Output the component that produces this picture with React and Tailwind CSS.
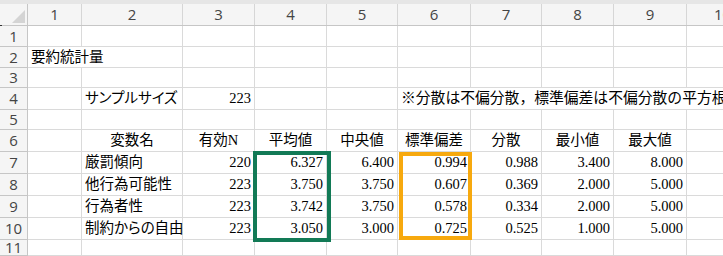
import React from 'react';

const colWidths = [54, 101, 72, 72, 71, 73, 71, 72, 73, 72];
const rowHeights = [21, 21, 20, 22, 20, 22, 22, 22, 22, 22, 16];

const vars = [
  ['厳罰傾向', '220', '6.327', '6.400', '0.994', '0.988', '3.400', '8.000'],
  ['他行為可能性', '223', '3.750', '3.750', '0.607', '0.369', '2.000', '5.000'],
  ['行為者性', '223', '3.742', '3.750', '0.578', '0.334', '2.000', '5.000'],
  ['制約からの自由', '223', '3.050', '3.000', '0.725', '0.525', '1.000', '5.000'],
];

const heads = ['変数名', '有効N', '平均値', '中央値', '標準偏差', '分散', '最小値', '最大値'];

// cells[row][col] = { text, align, noRight }
function cellFor(r, c) {
  if (r === 2 && c === 1) return { text: '要約統計量', align: 'left', noRight: true };
  if (r === 4) {
    if (c === 2) return { text: 'サンプルサイズ', align: 'left' };
    if (c === 3) return { text: '223', align: 'right' };
    if (c === 6) return { text: '※分散は不偏分散，標準偏差は不偏分散の平方根', align: 'left', noRight: true, note: true };
    if (c > 6) return { text: '', noRight: true };
  }
  if (r === 6 && c >= 2 && c <= 9) return { text: heads[c - 2], align: 'center' };
  if (r >= 7 && r <= 10 && c >= 2 && c <= 9) {
    const v = vars[r - 7][c - 2];
    return { text: v, align: c === 2 ? 'left' : 'right' };
  }
  return { text: '' };
}

function Cell({ w, h, r, c }) {
  const { text, align, noRight, note } = cellFor(r, c);
  const justify =
    align === 'right' ? 'justify-end pr-[3px]' : align === 'center' ? 'justify-center' : 'justify-start pl-[3px]';
  return (
    <div
      className={`shrink-0 flex items-center border-b border-[#dadada] ${noRight ? '' : 'border-r'} ${justify}`}
      style={{ width: w, height: h }}
    >
      {text && (
        <span
          className={`whitespace-nowrap relative z-10 text-black leading-none ${
            note ? 'text-[14.8px]' : "text-[14.5px] [font-feature-settings:'palt']"
          }`}
        >
          {text}
        </span>
      )}
    </div>
  );
}

export default function App() {
  return (
    <div className="relative w-[723px] h-[256px] overflow-hidden bg-white font-['Liberation_Serif','Noto_Sans_CJK_JP',serif]">
      {/* top band */}
      <div className="h-[4px] bg-[#e6e6e6]" />

      {/* column header */}
      <div className="flex h-[22px] bg-[#f5f5f5] border-b border-[#c6c6c6] font-['Open_Sans','Noto_Sans',sans-serif] text-[15px] text-[#444]">
        <div className="relative w-[28px] shrink-0 border-r border-[#c6c6c6]">
          <div className="absolute right-[2px] bottom-[2px] w-0 h-0 border-l-[13px] border-l-transparent border-b-[13px] border-b-[#d4d4d4]" />
        </div>
        {colWidths.map((w, i) => (
          <div
            key={i}
            className="shrink-0 flex items-center justify-center border-r border-[#d6d6d6] leading-none"
            style={{ width: w }}
          >
            {i + 1}
          </div>
        ))}
      </div>

      {/* rows */}
      {rowHeights.map((h, ri) => {
        const r = ri + 1;
        return (
          <div key={r} className="flex" style={{ height: h }}>
            <div
              className="w-[28px] shrink-0 flex items-center justify-center bg-[#f5f5f5] border-r border-b border-[#c6c6c6] font-['Open_Sans','Noto_Sans',sans-serif] text-[15px] text-[#444] leading-none"
            >
              {r}
            </div>
            {colWidths.map((w, ci) => (
              <Cell key={ci} w={w} h={h} r={r} c={ci + 1} />
            ))}
          </div>
        );
      })}

      {/* tick mark at left */}
      <div className="absolute left-0 top-[25px] w-[2px] h-[1px] bg-[#333]" />

      {/* highlighted boxes */}
      <div className="absolute left-[253px] top-[151px] w-[78px] h-[91px] border-4 border-[#127a56] z-20" />
      <div className="absolute left-[399px] top-[152px] w-[73px] h-[88px] border-4 border-[#f7a90e] z-20" />
    </div>
  );
}
